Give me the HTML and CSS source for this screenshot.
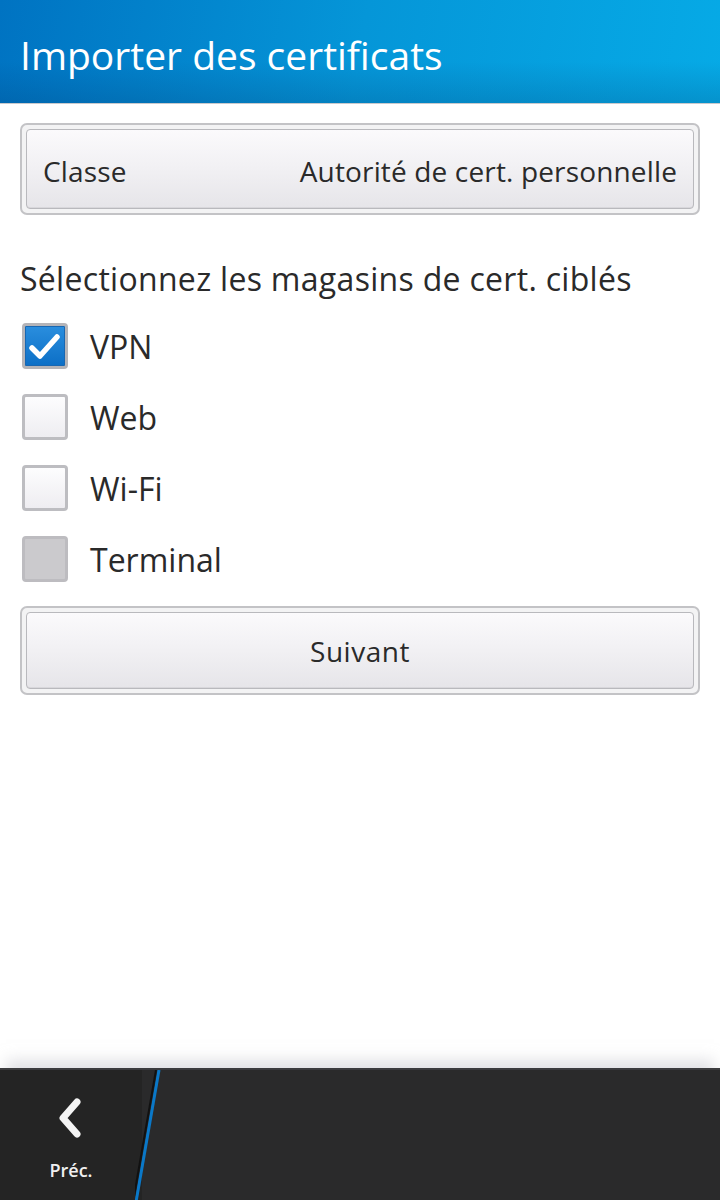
FILE: index.html
```html
<!DOCTYPE html>
<html lang="fr">
<head>
<meta charset="utf-8">
<title>Importer des certificats</title>
<link rel="stylesheet" href="styles.css">
</head>
<body>
<div class="screen">
  <header class="titlebar">
    <h1 class="title">Importer des certificats</h1>
  </header>
  <main class="content">
    <div class="dropdown">
      <div class="dropdown-inner">
        <span class="dd-label">Classe</span>
        <span class="dd-value">Autorité de cert. personnelle</span>
      </div>
    </div>
    <p class="section-label">Sélectionnez les magasins de cert. ciblés</p>
    <ul class="checklist">
      <li class="check-row">
        <span class="box checked">
          <svg viewBox="0 0 40 40" width="40" height="40"><path d="M7 22 L15 30 L32 11" fill="none" stroke="#fff" stroke-width="5.5" stroke-linecap="round" stroke-linejoin="round"/></svg>
        </span>
        <span class="check-text">VPN</span>
      </li>
      <li class="check-row">
        <span class="box"></span>
        <span class="check-text">Web</span>
      </li>
      <li class="check-row">
        <span class="box"></span>
        <span class="check-text">Wi-Fi</span>
      </li>
      <li class="check-row">
        <span class="box disabled"></span>
        <span class="check-text">Terminal</span>
      </li>
    </ul>
    <div class="button">
      <div class="button-inner">Suivant</div>
    </div>
  </main>
  <footer class="actionbar">
    <div class="back">
      <svg class="chev" viewBox="0 0 40 50" width="40" height="50"><path d="M26 8 L12 24 L26 40" fill="none" stroke="#f4f4f4" stroke-width="7" stroke-linecap="round" stroke-linejoin="round"/></svg>
      <span class="back-text">Préc.</span>
    </div>
    <svg class="slash" viewBox="0 0 30 132" width="30" height="132"><line x1="24" y1="0" x2="1" y2="132" stroke="#0a78c8" stroke-width="3"/><line x1="21" y1="0" x2="-2" y2="132" stroke="#111" stroke-width="2"/></svg>
  </footer>
</div>
</body>
</html>
```
FILE: styles.css
```css
* { box-sizing: border-box; }
html, body { margin: 0; padding: 0; }
body {
  background: #fff;
  font-family: "Open Sans", "Noto Sans", sans-serif;
  color: #2a2a2a;
}
.screen {
  width: 720px;
  height: 1200px;
  display: flex;
  flex-direction: column;
  overflow: hidden;
}
.titlebar {
  height: 104px;
  flex: none;
  background-image:
    linear-gradient(180deg, rgba(0,0,0,0) 60%, rgba(0,40,90,0.18) 100%),
    linear-gradient(100deg, #0073c2 0%, #0596d8 50%, #06aae6 100%);
  border-bottom: 1px solid #c9c9cc;
  display: flex;
  align-items: center;
  padding: 0 20px;
}
.title {
  margin: 0;
  font-weight: 400;
  font-size: 39px;
  letter-spacing: 0;
  color: #fff;
  padding-top: 5px;
}
.content {
  flex: 1;
  padding: 19px 20px 0 20px;
}
.dropdown, .button {
  border: 2px solid #c3c3c6;
  border-radius: 7px;
  padding: 4px;
  background: #f3f3f4;
}
.dropdown { height: 92px; }
.dropdown-inner, .button-inner {
  height: 100%;
  border: 1px solid #b9b9bd;
  border-radius: 4px;
  background: linear-gradient(180deg, #fbfafc 0%, #f1f0f3 50%, #e6e5e9 100%);
  box-shadow: inset 0 -1px 0 #d8d7db;
  display: flex;
  align-items: center;
  font-size: 28px;
  color: #2a2a2a;
}
.dropdown-inner {
  justify-content: space-between;
  padding: 3px 16px 0 16px;
  letter-spacing: 0.15px;
}
.section-label {
  margin: 44px 0 0 0;
  font-size: 32px;
  letter-spacing: 0.3px;
  line-height: 40px;
  color: #2a2a2a;
}
.checklist {
  list-style: none;
  margin: 24px 0 0 0;
  padding: 0;
  display: flex;
  flex-direction: column;
  gap: 25px;
}
.check-row {
  display: flex;
  align-items: center;
  height: 46px;
}
.box {
  width: 46px;
  height: 46px;
  margin-left: 2px;
  border: 3px solid #bdbdc1;
  border-radius: 4px;
  background: linear-gradient(180deg, #fdfdfe 0%, #eeedf1 100%);
  display: flex;
  align-items: center;
  justify-content: center;
}
.box.checked {
  background: linear-gradient(180deg, #2a8ede 0%, #0c6fc6 100%);
  border-color: #b4b4b8;
  box-shadow: inset 0 0 0 1px #1867b2;
}
.box.disabled {
  background: #cbcacd;
  border-color: #bdbcc0;
}
.check-text {
  margin-left: 22px;
  font-size: 32px;
  color: #2a2a2a;
}
.button {
  margin-top: 24px;
  height: 89px;
}
.button-inner {
  justify-content: center;
  letter-spacing: 0.5px;
}
.actionbar {
  flex: none;
  height: 132px;
  background: #2a2a2b;
  border-top: 2px solid #3c3c3e;
  position: relative;
  display: flex;
  box-shadow: 0 -14px 14px -6px rgba(200,200,205,0.55);
}
.back {
  width: 142px;
  display: flex;
  flex-direction: column;
  align-items: center;
  padding-top: 24px;
  background: #242424;
}
.chev { display: block; }
.back-text {
  margin-top: 14px;
  font-size: 18px;
  font-weight: 600;
  color: #f0f0f0;
}
.slash {
  position: absolute;
  left: 135px;
  top: 0;
}
```
